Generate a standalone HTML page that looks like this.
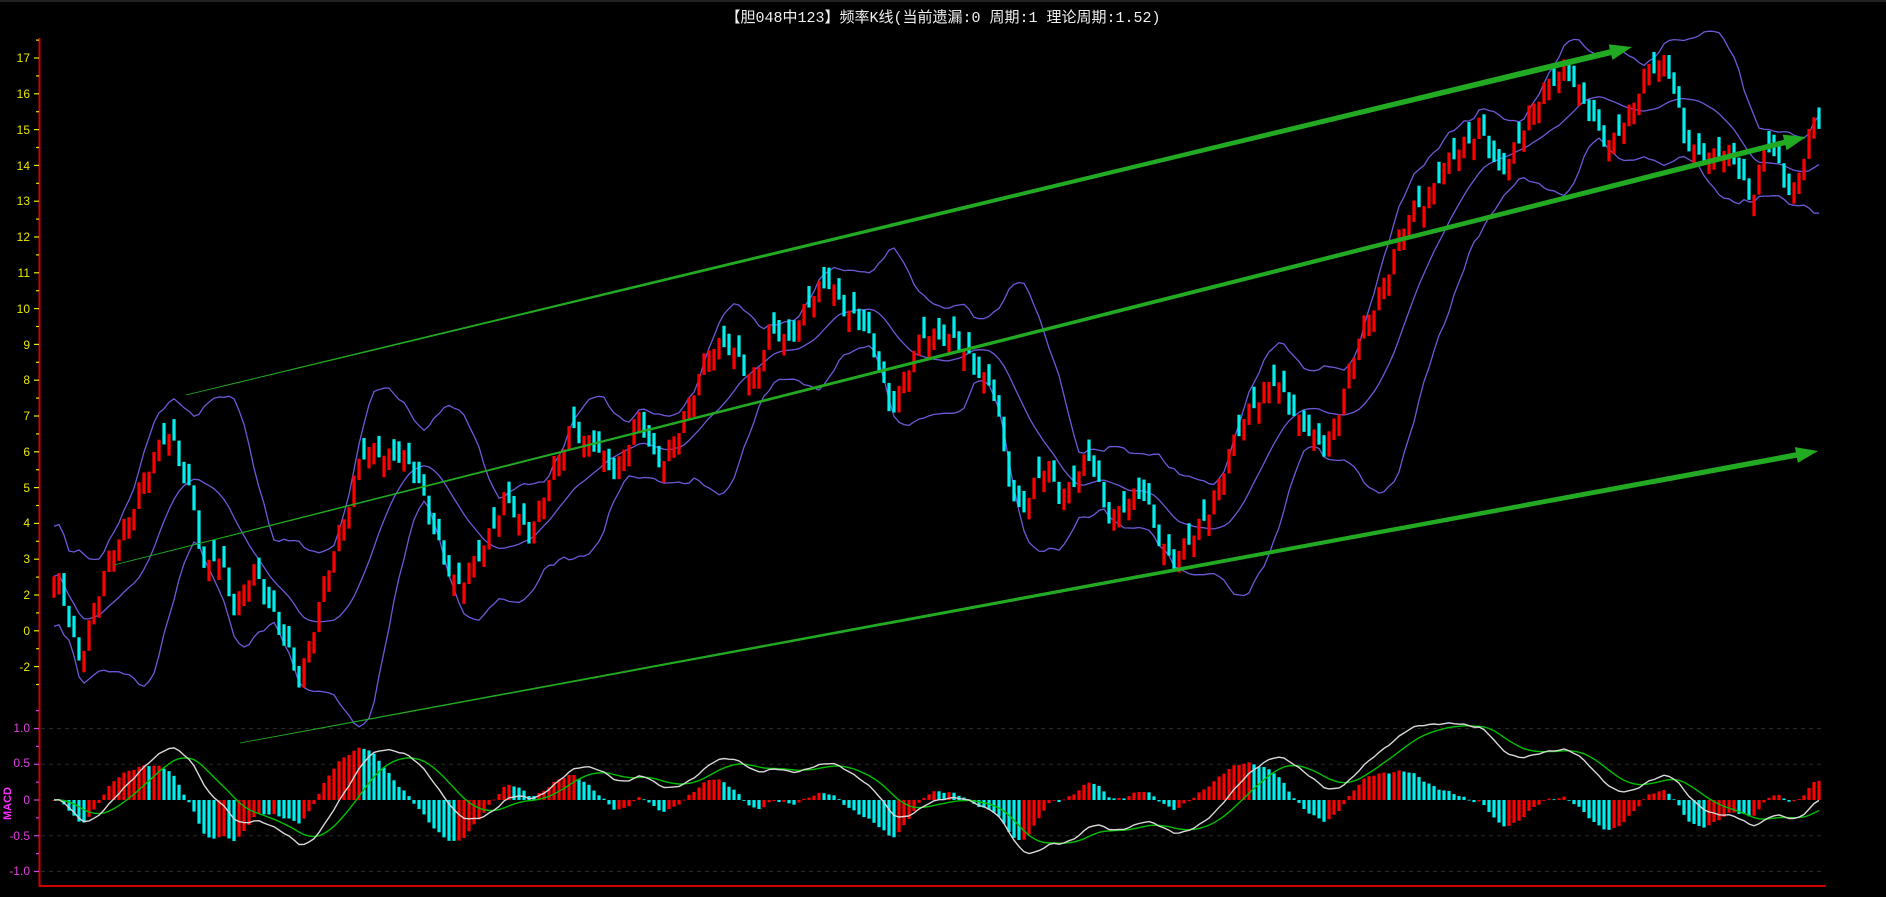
<!DOCTYPE html>
<html><head><meta charset="utf-8"><style>
html,body{margin:0;padding:0;background:#000;width:1886px;height:897px;overflow:hidden}
svg{display:block}
text{font-family:"Liberation Sans","Noto Sans CJK SC",sans-serif}
</style></head><body>
<svg id="s" width="1886" height="897" viewBox="0 0 1886 897" xmlns="http://www.w3.org/2000/svg">
<rect x="0" y="0" width="1886" height="897" fill="#000"/>
<rect x="0" y="0" width="1886" height="2" fill="#222"/>
<text x="943" y="22" fill="#f0f0f0" font-size="15" text-anchor="middle" style="font-family:'Liberation Mono','Noto Sans CJK SC',monospace">【胆048中123】频率K线(当前遗漏:0 周期:1 理论周期:1.52)</text>
<g id="grid"></g>
<g id="bands"></g>
<g id="bars"></g>
<g id="arrows"></g>
<g id="macd"></g>
<g id="axis" fill="#e8e800" font-size="12" text-anchor="end">
<text x="30" y="62">17</text><text x="30" y="98">16</text><text x="30" y="134">15</text><text x="30" y="170">14</text><text x="30" y="205">13</text><text x="30" y="241">12</text><text x="30" y="277">11</text><text x="30" y="313">10</text><text x="30" y="349">9</text><text x="30" y="384">8</text><text x="30" y="420">7</text><text x="30" y="456">6</text><text x="30" y="492">5</text><text x="30" y="527">4</text><text x="30" y="563">3</text><text x="30" y="599">2</text><text x="30" y="635">0</text><text x="30" y="671">-2</text>
</g>
<g fill="#e040e0" font-size="12" text-anchor="end">
<text x="30" y="732">1.0</text><text x="30" y="767">0.5</text><text x="30" y="804">0</text><text x="30" y="840">-0.5</text><text x="30" y="875">-1.0</text>
</g>
<text x="0" y="0" fill="#ff30ff" font-size="11" font-weight="bold" transform="translate(11,820) rotate(-90)">MACD</text>
<line x1="39.5" y1="38" x2="39.5" y2="887" stroke="#d00000" stroke-width="2"/>
<line x1="39" y1="886" x2="1825" y2="886" stroke="#d00000" stroke-width="2"/>
<g id="ticks"></g>
</svg>
<script>
var NS="http://www.w3.org/2000/svg";
function el(p,t,a){var e=document.createElementNS(NS,t);for(var k in a)e.setAttribute(k,a[k]);document.getElementById(p).appendChild(e);return e;}
function yP(u){return 58+(17-u)*35.8;}
function yM(v){return 800-v*71.5;}
for(var u=17.5;u>=-0.5;u-=0.5){var y=yP(u);el("ticks","line",{x1:u%1===0?34:36,y1:y,x2:39,y2:y,stroke:"#e8e800","stroke-width":1.2});}
[1,0.5,0,-0.5,-1,0.75,0.25,-0.25,-0.75,1.25].forEach(function(v){var y=yM(v);el("ticks","line",{x1:(v*2)%1===0?34:36,y1:y,x2:39,y2:y,stroke:"#e040e0","stroke-width":1.2});});
[1,0.5,-0.5,-1].forEach(function(v){el("grid","line",{x1:41,y1:yM(v),x2:1823,y2:yM(v),stroke:"#2a2a2a","stroke-dasharray":"4,4","stroke-width":1});});
var kp=[[48,480],[65,545],[95,450],[140,352],[160,420],[170,475],[180,450],[195,510],[210,465],[230,520],[248,563],[300,375],[335,375],[350,410],[380,490],[420,415],[440,440],[475,350],[510,390],[530,345],[545,385],[570,345],[590,280],[605,290],[625,310],[640,275],[655,285],[670,250],[690,235],[715,270],[730,300],[740,340],[770,270],[800,290],[825,320],[835,380],[845,425],[870,385],[880,410],[905,380],[920,425],[950,410],[975,470],[1010,410],[1035,340],[1060,315],[1085,355],[1100,375],[1130,280],[1170,180],[1200,140],[1230,100],[1245,150],[1270,95],[1300,50],[1325,105],[1340,115],[1355,95],[1370,50],[1385,50],[1400,115],[1420,130],[1440,125],[1455,165],[1470,120],[1490,160],[1510,95],[1515,105]];
var S=1.2028;
var K=kp.map(function(p){return [p[0]*S,17-(p[1]-47)/29.7];});
function interp(x){if(x<=K[0][0])return K[0][1];for(var i=1;i<K.length;i++){if(x<=K[i][0]){var a=K[i-1],b=K[i];return a[1]+(b[1]-a[1])*(x-a[0])/(b[0]-a[0]);}}return K[K.length-1][1];}
var xs=[],cl=[];
for(var i=0;;i++){var x=54+i*5;if(x>1820)break;xs.push(x);cl.push(interp(x)+0.22*Math.sin(i*1.9)+0.12*Math.sin(i*0.7+1));}
var N=cl.length;
var prev=cl[0]-0.5;
for(var i=0;i<N;i++){var o=prev,c=cl[i];var up=c>=o;var lo=Math.min(o,c),hi=Math.max(o,c);if(hi-lo<0.6){if(up){lo=hi-0.6;}else{hi=lo+0.6;}}
el("bars","rect",{x:xs[i]-1.6,y:yP(hi),width:3.2,height:(hi-lo)*35.8,fill:up?"#ff0000":"#00f0f0"});prev=c;}
var P=16,mid=[],upb=[],lob=[];
for(var i=0;i<N;i++){var s=0,n=0;for(var j=Math.max(0,i-P+1);j<=i;j++){s+=cl[j];n++;}var m=s/n,v=0;for(var j=Math.max(0,i-P+1);j<=i;j++)v+=(cl[j]-m)*(cl[j]-m);var sd=Math.sqrt(v/n);if(n<4)sd=0.7;mid.push(m);upb.push(m+2*sd);lob.push(m-2*sd);}
function poly(arr,f){return arr.map(function(v,i){return xs[i].toFixed(1)+","+f(v).toFixed(1);}).join(" ");}
[mid,upb,lob].forEach(function(a){el("bands","polyline",{points:poly(a,yP),fill:"none",stroke:"#6a5ad8","stroke-width":1.3});});
function arrow(x1,y1,x2,y2,w1,w2,hl,hw){var dx=x2-x1,dy=y2-y1,L=Math.sqrt(dx*dx+dy*dy),ux=dx/L,uy=dy/L,nx=-uy,ny=ux;var bx=x2-ux*hl,by=y2-uy*hl;
var pts=[[x1+nx*w1/2,y1+ny*w1/2],[bx+nx*w2/2,by+ny*w2/2],[bx+nx*hw,by+ny*hw],[x2,y2],[bx-nx*hw,by-ny*hw],[bx-nx*w2/2,by-ny*w2/2],[x1-nx*w1/2,y1-ny*w1/2]];
el("arrows","polygon",{points:pts.map(function(p){return p[0].toFixed(1)+","+p[1].toFixed(1);}).join(" "),fill:"#22aa22"});}
arrow(186,395,1632,47,0.8,6,22,8);
arrow(114,565,1806,137,0.8,5.5,22,8);
arrow(240,743,1818,451,0.8,5.5,22,8);
function ema(a,n){var k=2/(n+1),r=[a[0]];for(var i=1;i<a.length;i++)r.push(a[i]*k+r[i-1]*(1-k));return r;}
var e1=ema(cl,12),e2=ema(cl,26),dif=e1.map(function(v,i){return v-e2[i];});
var mx=0;dif.forEach(function(v){mx=Math.max(mx,Math.abs(v));});var sc=1.08/mx;dif=dif.map(function(v){return v*sc;});
var dea=ema(dif,9);
var ph=0;
for(var i=0;i<N;i++){var h=1.9*(dif[i]-dea[i]);var y0=800,y1=yM(h);el("macd","rect",{x:xs[i]-1.6,y:Math.min(y0,y1),width:3.2,height:Math.max(0.8,Math.abs(y1-y0)),fill:h>=ph?"#ff0000":"#00f0f0"});ph=h;}
el("macd","polyline",{points:poly(dea,yM),fill:"none",stroke:"#00c000","stroke-width":1.4});
el("macd","polyline",{points:poly(dif,yM),fill:"none",stroke:"#d8d8d8","stroke-width":1.4});
</script>
</body></html>
